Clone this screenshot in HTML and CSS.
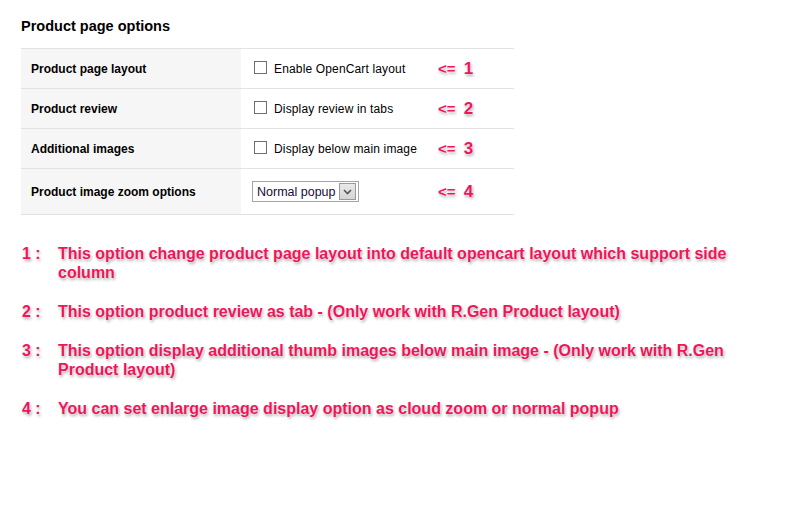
FILE: index.html
```html
<!DOCTYPE html>
<html>
<head>
<meta charset="utf-8">
<link rel="stylesheet" href="styles.css">
</head>
<body>
<div class="page">
  <h2 class="title">Product page options</h2>
  <table class="opts">
    <tr>
      <td class="lbl">Product page layout</td>
      <td class="val"><label class="chk"><span class="box"></span>Enable OpenCart layout</label></td>
      <td class="mark">&lt;= <span class="num">1</span></td>
    </tr>
    <tr>
      <td class="lbl">Product review</td>
      <td class="val"><label class="chk"><span class="box"></span>Display review in tabs</label></td>
      <td class="mark">&lt;= <span class="num">2</span></td>
    </tr>
    <tr>
      <td class="lbl">Additional images</td>
      <td class="val"><label class="chk"><span class="box"></span>Display below main image</label></td>
      <td class="mark">&lt;= <span class="num">3</span></td>
    </tr>
    <tr class="tall">
      <td class="lbl">Product image zoom options</td>
      <td class="val"><span class="select"><span class="sel-text">Normal popup</span><span class="sel-btn"><svg width="9" height="6" viewBox="0 0 9 6"><path d="M1 1 L4.5 4.5 L8 1" fill="none" stroke="#555" stroke-width="1.6"/></svg></span></span></td>
      <td class="mark">&lt;= <span class="num">4</span></td>
    </tr>
  </table>
  <div class="notes">
    <div class="note"><span class="n">1 :</span><span class="t">This option change product page layout into default opencart layout which support side column</span></div>
    <div class="note"><span class="n">2 :</span><span class="t">This option product review as tab - (Only work with R.Gen Product layout)</span></div>
    <div class="note"><span class="n">3 :</span><span class="t">This option display additional thumb images below main image - (Only work with R.Gen Product layout)</span></div>
    <div class="note"><span class="n">4 :</span><span class="t">You can set enlarge image display option as cloud zoom or normal popup</span></div>
  </div>
</div>
</body>
</html>
```
FILE: styles.css
```css
html, body { margin: 0; padding: 0; background: #fff; }
body { font-family: "Liberation Sans", Arial, sans-serif; color: #000; }
.page { padding: 18px 0 0 21px; }
.title { font-size: 14.5px; font-weight: bold; margin: 0 0 13px 0; line-height: 17px; color: #000; }
.opts { border-collapse: collapse; width: 493px; font-size: 12px; }
.opts td { border-top: 1px solid #e2e2e2; border-bottom: 1px solid #e2e2e2; height: 39px; padding: 0; vertical-align: middle; }
.opts tr.tall td { height: 45px; }
.lbl { width: 210px; padding-left: 10px !important; background: #f6f6f6; font-weight: bold; color: #000; }
.val { width: 184px; padding-left: 13px !important; color: #000; letter-spacing: 0.15px; }
.chk { display: flex; align-items: center; }
.box { width: 11px; height: 11px; border: 1px solid #6f6f6f; background: #fff; margin-right: 7px; position: relative; top: -1px; }
.mark { color: #f0145a; font-weight: bold; font-size: 15px; text-shadow: 0 0 2px #fff, 1px 2px 3px rgba(0,0,0,0.35); padding-left: 0; }
.num { font-size: 17px; margin-left: 4px; }
.select { display: inline-flex; align-items: center; justify-content: space-between; box-sizing: border-box; width: 107px; border: 1px solid #a4a4a4; height: 21px; padding: 0 2px 0 4px; background: #fff; margin-left: -2px; }
.sel-text { color: #1c0a3a; font-size: 12.5px; letter-spacing: 0; }
.sel-btn { width: 15px; height: 15px; border: 1px solid #9a9a9a; background: linear-gradient(#e9e9e9, #d4d4d4); display: flex; align-items: center; justify-content: center; }
.notes { margin-top: 29px; font-weight: bold; font-size: 16px; color: #f0145a; text-shadow: 0 0 2px #fff, 1px 2px 3px rgba(0,0,0,0.35); }
.note { display: flex; line-height: 19px; margin-bottom: 20px; margin-left: 1px; }
.note .n { width: 36px; flex: none; }
.note .t { width: 700px; }
```
